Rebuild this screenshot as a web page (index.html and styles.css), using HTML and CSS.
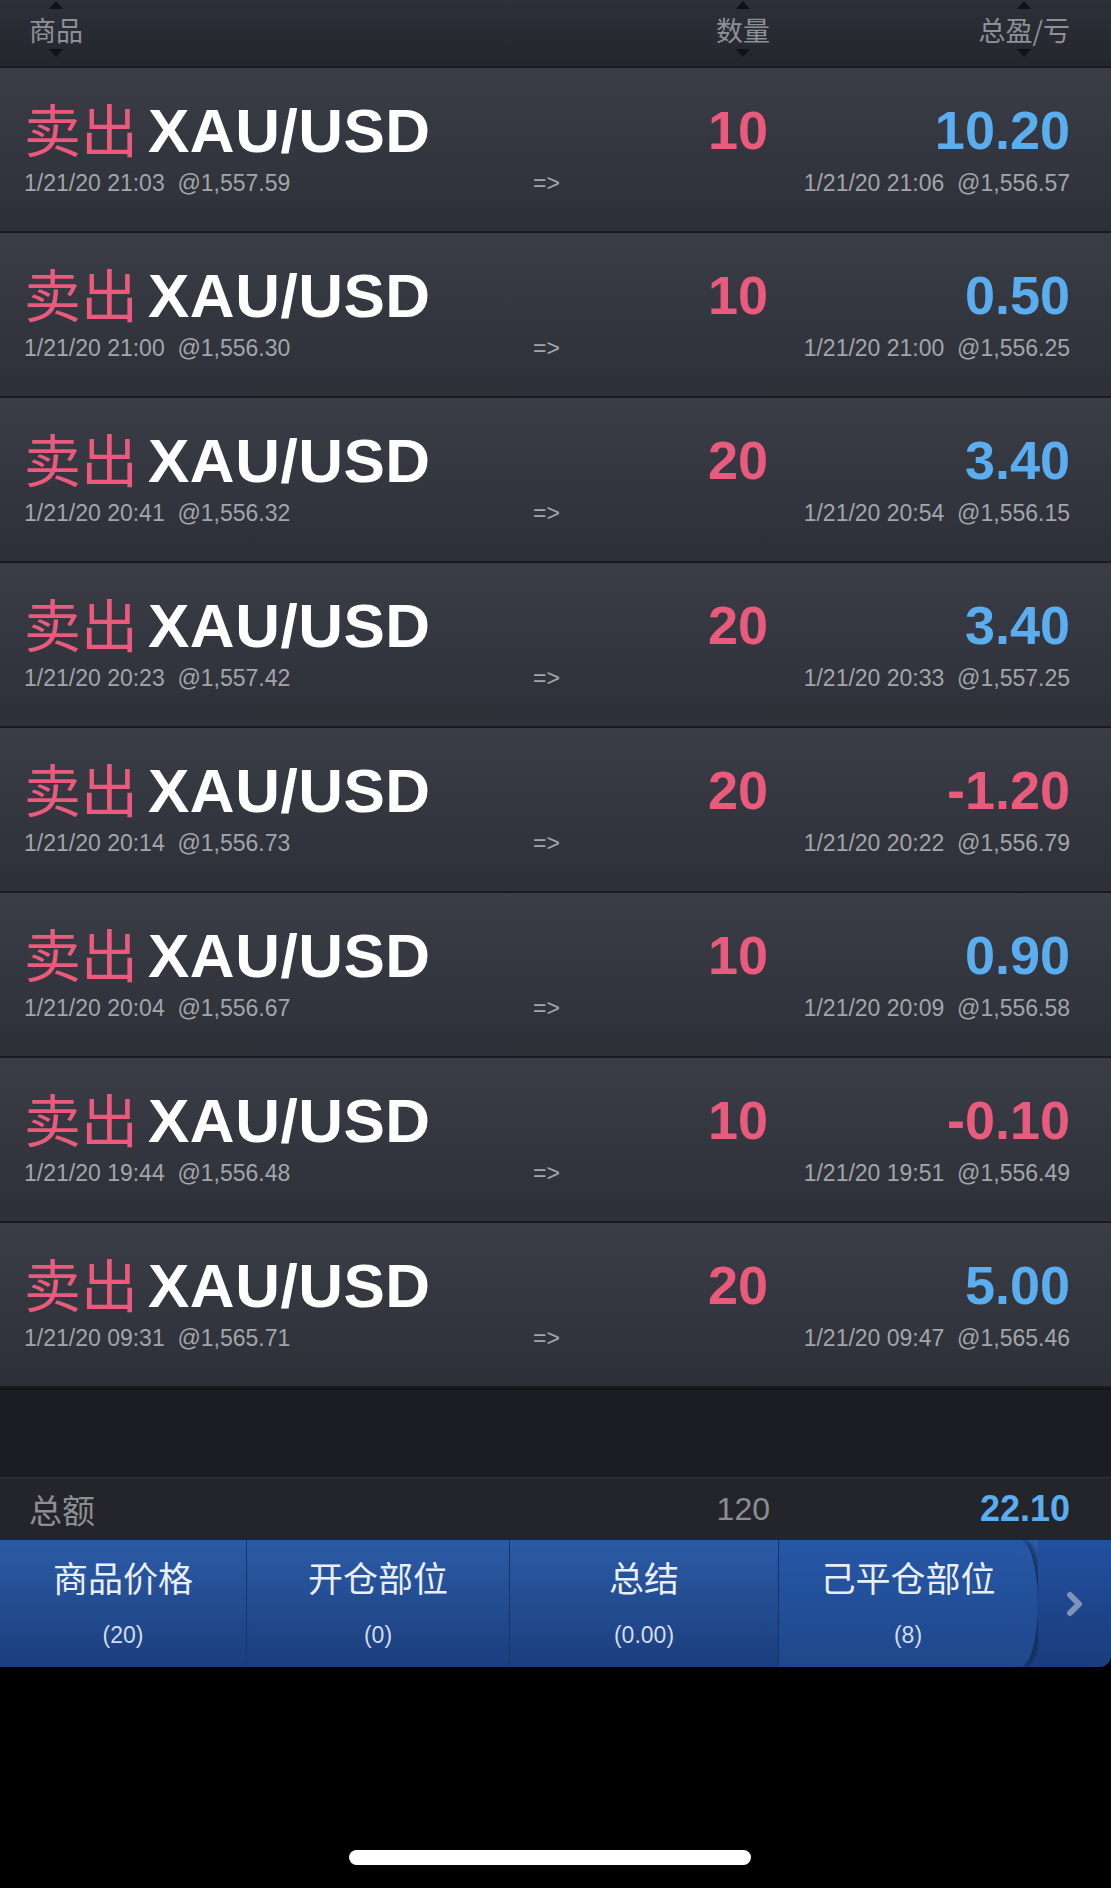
FILE: index.html
```html
<!DOCTYPE html>
<html lang="zh-CN">
<head>
    <meta charset="UTF-8">
    <meta name="viewport" content="width=device-width, initial-scale=1.0">
    <title>己平仓部位</title>
    <link rel="stylesheet" href="styles.css">
</head>
<body>
    <div class="screen">
        <div class="head">
            <span class="col-name"><span class="sort">商品</span></span>
            <span class="col-qty"><span class="sort">数量</span></span>
            <span class="col-pnl"><span class="sort">总盈/亏</span></span>
        </div>

        <div class="trades">
            <div class="trade">
                <div class="name"><span class="side">卖出</span><span class="pair">XAU/USD</span></div>
                <div class="qty">10</div>
                <div class="pnl up">10.20</div>
                <div class="when">1/21/20 21:03&nbsp; @1,557.59</div>
                <div class="arrow">=&gt;</div>
                <div class="when close">1/21/20 21:06&nbsp; @1,556.57</div>
            </div>
            <div class="trade">
                <div class="name"><span class="side">卖出</span><span class="pair">XAU/USD</span></div>
                <div class="qty">10</div>
                <div class="pnl up">0.50</div>
                <div class="when">1/21/20 21:00&nbsp; @1,556.30</div>
                <div class="arrow">=&gt;</div>
                <div class="when close">1/21/20 21:00&nbsp; @1,556.25</div>
            </div>
            <div class="trade">
                <div class="name"><span class="side">卖出</span><span class="pair">XAU/USD</span></div>
                <div class="qty">20</div>
                <div class="pnl up">3.40</div>
                <div class="when">1/21/20 20:41&nbsp; @1,556.32</div>
                <div class="arrow">=&gt;</div>
                <div class="when close">1/21/20 20:54&nbsp; @1,556.15</div>
            </div>
            <div class="trade">
                <div class="name"><span class="side">卖出</span><span class="pair">XAU/USD</span></div>
                <div class="qty">20</div>
                <div class="pnl up">3.40</div>
                <div class="when">1/21/20 20:23&nbsp; @1,557.42</div>
                <div class="arrow">=&gt;</div>
                <div class="when close">1/21/20 20:33&nbsp; @1,557.25</div>
            </div>
            <div class="trade">
                <div class="name"><span class="side">卖出</span><span class="pair">XAU/USD</span></div>
                <div class="qty">20</div>
                <div class="pnl down">-1.20</div>
                <div class="when">1/21/20 20:14&nbsp; @1,556.73</div>
                <div class="arrow">=&gt;</div>
                <div class="when close">1/21/20 20:22&nbsp; @1,556.79</div>
            </div>
            <div class="trade">
                <div class="name"><span class="side">卖出</span><span class="pair">XAU/USD</span></div>
                <div class="qty">10</div>
                <div class="pnl up">0.90</div>
                <div class="when">1/21/20 20:04&nbsp; @1,556.67</div>
                <div class="arrow">=&gt;</div>
                <div class="when close">1/21/20 20:09&nbsp; @1,556.58</div>
            </div>
            <div class="trade">
                <div class="name"><span class="side">卖出</span><span class="pair">XAU/USD</span></div>
                <div class="qty">10</div>
                <div class="pnl down">-0.10</div>
                <div class="when">1/21/20 19:44&nbsp; @1,556.48</div>
                <div class="arrow">=&gt;</div>
                <div class="when close">1/21/20 19:51&nbsp; @1,556.49</div>
            </div>
            <div class="trade">
                <div class="name"><span class="side">卖出</span><span class="pair">XAU/USD</span></div>
                <div class="qty">20</div>
                <div class="pnl up">5.00</div>
                <div class="when">1/21/20 09:31&nbsp; @1,565.71</div>
                <div class="arrow">=&gt;</div>
                <div class="when close">1/21/20 09:47&nbsp; @1,565.46</div>
            </div>
        </div>

        <div class="blank"></div>

        <div class="total">
            <span class="total-label">总额</span>
            <span class="total-qty">120</span>
            <span class="total-pnl">22.10</span>
        </div>

        <nav class="tabs">
            <div class="tab tab-1">商品价格<small>(20)</small></div>
            <div class="tab tab-2">开仓部位<small>(0)</small></div>
            <div class="tab tab-3">总结<small>(0.00)</small></div>
            <div class="tab tab-4 active">己平仓部位<small>(8)</small></div>
            <div class="tab more">
                <svg width="20" height="26" viewBox="0 0 20 26">
                    <path d="M5 4 L14 13 L5 22" fill="none" stroke="#7e93b6" stroke-width="6" stroke-linecap="round" stroke-linejoin="round"/>
                </svg>
            </div>
        </nav>

        <div class="home-bar"></div>
    </div>
</body>
</html>
```

FILE: styles.css
```css
body {
    margin: 0;
    background-color: #000;
    font-family: "Liberation Sans", Arial, "Noto Sans CJK SC", sans-serif;
}
.screen {
    width: 1111px;
    height: 1888px;
    overflow: hidden;
    background-color: #000;
}

/* column header */
.head {
    display: grid;
    grid-template-columns: 480px 261px 300px;
    align-items: center;
    height: 66px;
    padding: 0 41px 0 29px;
    background: linear-gradient(#2d3038, #24262d);
    border-bottom: 2px solid #191a1f;
    font-family: "Noto Sans CJK SC", sans-serif;
    font-size: 27px;
    color: #8e9097;
}
.col-qty, .col-pnl {
    text-align: right;
}
.sort {
    position: relative;
    display: inline-block;
    line-height: 30px;
    top: -4px;
}
.sort::before, .sort::after {
    content: "";
    position: absolute;
    left: 50%;
    margin-left: -7px;
    border-left: 7px solid transparent;
    border-right: 7px solid transparent;
}
.sort::before {
    top: -14px;
    border-bottom: 8px solid #111216;
}
.sort::after {
    top: 34px;
    border-top: 8px solid #111216;
}

/* trade rows */
.trade {
    display: grid;
    grid-template-columns: 485px 259px 302px;
    grid-template-rows: 64px 28px;
    row-gap: 8px;
    align-items: baseline;
    height: 134px;
    padding: 29px 41px 0 24px;
    background: linear-gradient(#3a3d46, #2e3038);
    border-bottom: 2px solid #1a1b20;
}
.name {
    display: flex;
    align-items: baseline;
    line-height: 64px;
}
.side {
    font-family: "Noto Sans CJK SC", sans-serif;
    font-size: 57px;
    line-height: 60px;
    color: #ea5a7c;
    margin-right: 10px;
}
.pair {
    font-size: 62px;
    font-weight: bold;
    letter-spacing: 0.5px;
    color: #fff;
}
.qty, .pnl {
    font-size: 54px;
    font-weight: bold;
    line-height: 64px;
    text-align: right;
    position: relative;
    top: -3px;
}
.qty {
    color: #ea5a7c;
}
.up {
    color: #5aaef0;
}
.down {
    color: #ea5a7c;
}
.when {
    font-size: 23px;
    line-height: 28px;
    color: #a3a5ab;
    white-space: pre;
}
.close {
    text-align: right;
}
.arrow {
    font-size: 23px;
    line-height: 28px;
    color: #a3a5ab;
    padding-left: 24px;
}

/* empty area and totals */
.blank {
    height: 87px;
    background-color: #1c1d23;
    border-top: 2px solid #15161a;
}
.total {
    display: grid;
    grid-template-columns: 480px 261px 300px;
    align-items: center;
    height: 62px;
    padding: 0 41px 0 29px;
    background-color: #24252b;
    border-top: 1px solid #303137;
}
.total-label {
    font-family: "Noto Sans CJK SC", sans-serif;
    font-size: 33px;
    color: #8d8f95;
}
.total-qty {
    font-size: 32px;
    color: #8b8d92;
    text-align: right;
}
.total-pnl {
    font-size: 36px;
    font-weight: bold;
    color: #5aaef0;
    text-align: right;
}

/* bottom tabs */
.tabs {
    display: flex;
    height: 127px;
    background: linear-gradient(#2b5ba6, #1b3e7d);
    border-bottom-right-radius: 12px;
    overflow: hidden;
}
.tab {
    display: flex;
    flex-direction: column;
    align-items: center;
    padding-top: 14px;
    box-sizing: border-box;
    font-family: "Noto Sans CJK SC", sans-serif;
    font-size: 35px;
    line-height: 46px;
    color: #e9eef7;
    border-right: 1px solid #173565;
}
.tab small {
    font-family: "Liberation Sans", Arial, sans-serif;
    font-size: 23px;
    line-height: 30px;
    margin-top: 20px;
    color: #d3dcec;
}
.tab-1 {
    width: 247px;
}
.tab-2 {
    width: 263px;
}
.tab-3 {
    width: 268px;
    border-right: none;
}
.tab-4 {
    width: 262px;
}
.active {
    background: linear-gradient(#2657a6, #1f478b);
    border-top-right-radius: 40px 130px;
    border-bottom-right-radius: 40px 130px;
    border-right: 2px solid #16305c;
    box-shadow: 3px 0 4px rgba(0, 0, 0, 0.35), inset 1px 0 0 #17346a;
}
.more {
    flex: 1;
    justify-content: center;
    padding-top: 0;
    border-right: none;
    background: linear-gradient(#2250a0, #1a3c7a);
    margin-left: -2px;
}

.home-bar {
    width: 402px;
    height: 15px;
    margin: 183px 0 0 349px;
    border-radius: 8px;
    background-color: #fff;
}
```
